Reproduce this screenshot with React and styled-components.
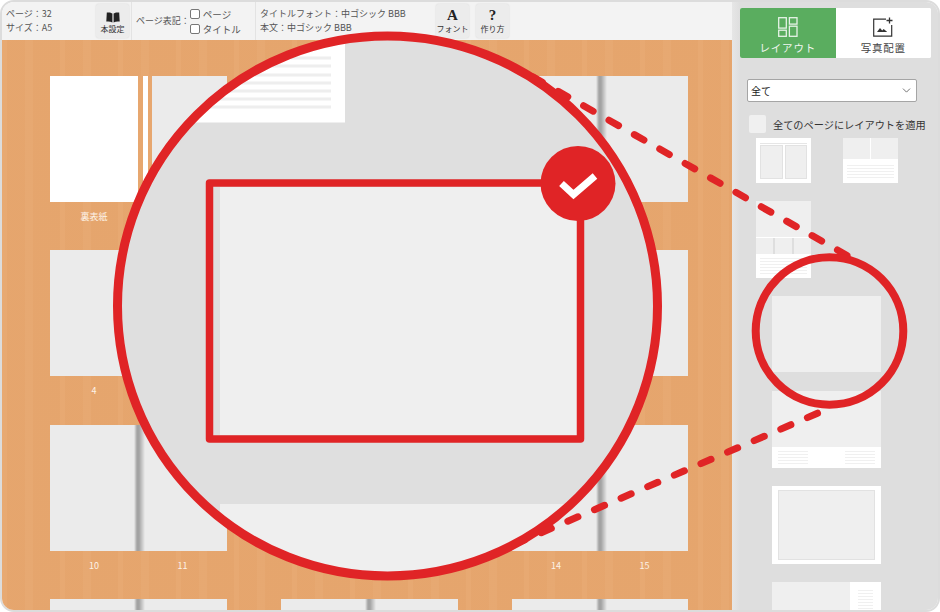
import React from 'react'
import styled, { createGlobalStyle } from 'styled-components'
import { ChevronDown } from 'lucide-react'

const GlobalStyle = createGlobalStyle`
  * { box-sizing: border-box; }
  html, body { margin: 0; padding: 0; background: #fff; }
  body { font-family: "Noto Sans CJK JP", "Noto Sans", sans-serif; color: #444; }
`

const rows = [
  [{ cover: true, labels: ['裏表紙', ''] }, {}, {}],
  [{ labels: ['4', ''] }, {}, {}],
  [{ labels: ['10', '11'] }, {}, { labels: ['14', '15'] }],
  [{}, {}, {}],
]

const App = () => (
  <>
    <GlobalStyle />
    <Frame>
      <Main>
        <Toolbar>
          <Info>
            <span>ページ：32</span>
            <span>サイズ：A5</span>
          </Info>
          <ToolButton>
            <BookIcon />
            <small>本設定</small>
          </ToolButton>
          <Section $width={124}>
            <span>ページ表記：</span>
            <Checks>
              <CheckRow><Box />ページ</CheckRow>
              <CheckRow><Box />タイトル</CheckRow>
            </Checks>
          </Section>
          <FontInfo>
            <span>タイトルフォント：中ゴシック BBB</span>
            <span>本文：中ゴシック BBB</span>
          </FontInfo>
          <ToolButton $gap={7}>
            <Glyph>A</Glyph>
            <small>フォント</small>
          </ToolButton>
          <ToolButton>
            <Glyph>?</Glyph>
            <small>作り方</small>
          </ToolButton>
        </Toolbar>
        <Workspace>
          <Spreads>
            {rows.flat().map((spread, i) => (
              <SpreadCell key={i}>
                {spread.cover ? (
                  <Spread $cover>
                    <CoverBack />
                    <Spine />
                    <CoverFront />
                  </Spread>
                ) : (
                  <Spread />
                )}
                <PageLabels>
                  {(spread.labels || []).map((label, j) => (
                    <span key={j}>{label}</span>
                  ))}
                </PageLabels>
              </SpreadCell>
            ))}
          </Spreads>
        </Workspace>
      </Main>
      <Sidebar>
        <Tabs>
          <Tab $active>
            <LayoutIcon />
            レイアウト
          </Tab>
          <Tab>
            <PhotoIcon />
            写真配置
          </Tab>
        </Tabs>
        <SelectBox>
          全て
          <ChevronDown size={13} strokeWidth={1.5} color="#555" />
        </SelectBox>
        <ApplyRow>
          <ApplyBox />
          全てのページにレイアウトを適用
        </ApplyRow>
        <SmallThumbs>
          <SmallThumb $height={45} $pad="5px 4px 4px">
            <TopBand />
            <TwoUp $height={34}>
              <Photo $edge />
              <Photo $edge />
            </TwoUp>
          </SmallThumb>
          <SmallThumb $height={45}>
            <TwoUp $height={21} $gap={1}>
              <Photo />
              <Photo />
            </TwoUp>
            <Lines $count={5} $pad="4px 4px" />
          </SmallThumb>
          <SmallThumb $height={77}>
            <Photo $height={36} />
            <ThreeUp>
              <Photo />
              <Photo />
              <Photo />
            </ThreeUp>
            <Lines $count={5} $pad="3px 4px" />
          </SmallThumb>
        </SmallThumbs>
        <LargeThumbs>
          <LargeThumb $height={77} $plain>
            <Photo $height={76} />
          </LargeThumb>
          <LargeThumb $height={76.5}>
            <Photo $height={56} />
            <Columns>
              <Lines $count={5} />
              <Lines $count={5} />
            </Columns>
          </LargeThumb>
          <LargeThumb $height={78} $pad="4px 6px 4px">
            <Photo $edge $height={70} />
          </LargeThumb>
          <LargeThumb $height={40} $row>
            <Photo />
            <SideText>
              <Lines $count={6} />
            </SideText>
          </LargeThumb>
        </LargeThumbs>
      </Sidebar>
      <Overlay viewBox="0 0 940 612">
        <defs>
          <clipPath id="lens">
            <circle cx="387.5" cy="306" r="270" />
          </clipPath>
        </defs>
        <circle cx="387.5" cy="306" r="270" fill="#dfdfdf" />
        <g clipPath="url(#lens)">
          <rect x="100" y="30" width="245" height="92.5" fill="#fff" />
          {[58, 66, 75, 83, 91, 99, 107].map((y) => (
            <rect key={y} x="205" y={y - 1.5} width="126" height="3" fill="#eeeeee" />
          ))}
          <rect x="220" y="504" width="345" height="90" fill="#efefef" />
        </g>
        <circle cx="387.5" cy="306" r="270" fill="none" stroke="#e02426" strokeWidth="9" />
        <rect x="220" y="187" width="357" height="248" fill="#efefef" />
        <rect x="209.5" y="183" width="371" height="256" fill="none" stroke="#e02426" strokeWidth="7.5" strokeLinejoin="round" />
        <circle cx="578" cy="183.5" r="37.5" fill="#e02426" />
        <path d="M561.5 183.5 L573.5 194.5 L595 176" fill="none" stroke="#fff" strokeWidth="7" />
        <line x1="532.8" y1="76.9" x2="848" y2="256" stroke="#e02426" strokeWidth="7" strokeLinecap="round" strokeDasharray="11 18.2" />
        <line x1="514.6" y1="544.2" x2="825" y2="410" stroke="#e02426" strokeWidth="7" strokeLinecap="round" strokeDasharray="11 18" />
        <circle cx="829.5" cy="331" r="73.8" fill="none" stroke="#e02426" strokeWidth="8" />
      </Overlay>
    </Frame>
  </>
)

const BookIcon = () => (
  <svg width="14" height="11" viewBox="0 0 14 11">
    <path d="M6.4 1.6C5.2.6 3 .2.8.6L.3 9.6c2.2-.4 4.5-.1 6.1.9zM7.6 1.6C8.8.6 11 .2 13.2.6l.5 9c-2.2-.4-4.5-.1-6.1.9z" fill="#222" />
  </svg>
)

const LayoutIcon = () => (
  <svg width="20" height="20" viewBox="0 0 20 20" fill="none" stroke="#fff" strokeWidth="1.3" opacity="0.85">
    <rect x="0.7" y="0.7" width="7.6" height="10.4" />
    <rect x="11.4" y="0.7" width="7.6" height="6.4" />
    <rect x="0.7" y="13.2" width="7.6" height="6.1" />
    <rect x="11.4" y="9.2" width="7.6" height="10.1" />
  </svg>
)

const PhotoIcon = () => (
  <svg width="21" height="20" viewBox="0 0 21 20" fill="none">
    <path d="M13 2.2H.7v17h18V8" stroke="#333" strokeWidth="1.2" />
    <path d="M16.5 .5v6M13.5 3.5h6" stroke="#333" strokeWidth="1.3" />
    <path d="M4 15l3-4 2.200 2.500 1.500-1.500 3.500 3z" fill="#333" />
  </svg>
)

const Frame = styled.div`
  position: relative;
  display: flex;
  width: 940px;
  height: 612px;
  border: 2px solid #dcdcdc;
  border-radius: 14px;
  overflow: hidden;
`

const Main = styled.div`
  display: flex;
  flex-direction: column;
  width: 730px;
  flex-shrink: 0;
`

const Toolbar = styled.div`
  display: flex;
  align-items: center;
  height: 38px;
  flex-shrink: 0;
  background: #f3f3f3;
  font-size: 9px;
  line-height: 14px;
  color: #555;
`

const Info = styled.div`
  display: flex;
  flex-direction: column;
  width: 94px;
  padding-left: 4px;
`

const ToolButton = styled.div`
  display: flex;
  flex-direction: column;
  align-items: center;
  justify-content: flex-end;
  width: 33px;
  height: 34px;
  margin-right: ${(p) => p.$gap || 0}px;
  padding-bottom: 3px;
  background: #ececec;
  border-radius: 3px;
  box-shadow: 0 0 2px rgba(0, 0, 0, 0.12);
  small {
    font-size: 8px;
    line-height: 12px;
    color: #333;
    white-space: nowrap;
  }
`

const Glyph = styled.span`
  font-family: "Liberation Serif", serif;
  font-weight: 700;
  font-size: 15px;
  line-height: 15px;
  color: #222;
`

const Section = styled.div`
  display: flex;
  align-items: center;
  width: ${(p) => p.$width}px;
  height: 100%;
  margin-left: 2px;
  padding-left: 4px;
  border-left: 1px solid #e3e3e3;
`

const Checks = styled.div`
  display: flex;
  flex-direction: column;
`

const CheckRow = styled.div`
  display: flex;
  align-items: center;
  gap: 3px;
  height: 15px;
  font-size: 9.5px;
`

const Box = styled.span`
  width: 10px;
  height: 10px;
  background: #fff;
  border: 1px solid #777;
  border-radius: 2px;
`

const FontInfo = styled.div`
  display: flex;
  flex-direction: column;
  width: 181px;
  height: 100%;
  justify-content: center;
  padding-left: 4px;
  border-left: 1px solid #e3e3e3;
  white-space: nowrap;
`

const Workspace = styled.div`
  flex: 1;
  overflow: hidden;
  padding: 36px 0 0 48px;
  background-color: #e7a76f;
  background-image:
    repeating-linear-gradient(90deg, rgba(255, 255, 255, 0.025) 0 5px, rgba(160, 90, 30, 0.02) 5px 23px, rgba(255, 255, 255, 0.02) 23px 31px, rgba(160, 90, 30, 0.025) 31px 58px);
`

const Spreads = styled.div`
  display: grid;
  grid-template-columns: 177px 177px 176px;
  column-gap: 54px;
`

const SpreadCell = styled.div`
  display: flex;
  flex-direction: column;
`

const Spread = styled.div`
  display: flex;
  height: 126px;
  background: ${(p) =>
    p.$cover
      ? '#ebebeb'
      : 'linear-gradient(90deg, #ebebeb 84px, #a3a3a3 87px, #a3a3a3 89px, #ebebeb 95px)'};
`

const CoverBack = styled.div`
  width: 88px;
  background: #fff;
`

const Spine = styled.div`
  width: 14px;
  background: linear-gradient(90deg, #e7a76f 5px, #fff 5px, #fff 10px, #e7a76f 10px);
`

const CoverFront = styled.div`
  flex: 1;
`

const PageLabels = styled.div`
  display: grid;
  grid-template-columns: 88px 89px;
  height: 48.4px;
  padding-top: 8px;
  font-size: 9px;
  line-height: 14px;
  color: #fdf3e8;
  text-align: center;
`

const Sidebar = styled.div`
  width: 206px;
  padding: 6px 7px 0 8px;
  overflow: hidden;
  background: linear-gradient(90deg, #e6e6e6 0, #dedede 8px);
`

const Tabs = styled.div`
  display: flex;
  height: 50px;
  background: #fff;
  border-radius: 2px;
  overflow: hidden;
`

const Tab = styled.div`
  display: flex;
  flex-direction: column;
  align-items: center;
  gap: 3px;
  width: 50%;
  padding-top: 9px;
  font-size: 10.5px;
  line-height: 15px;
  letter-spacing: 0.8px;
  color: ${(p) => (p.$active ? '#f0f6ef' : '#444')};
  background: ${(p) => (p.$active ? '#5aad5f' : '#fff')};
`

const SelectBox = styled.div`
  display: flex;
  align-items: center;
  justify-content: space-between;
  width: 170px;
  height: 23px;
  margin: 21px 0 0 7px;
  padding: 0 3px;
  font-size: 10px;
  color: #222;
  background: #fff;
  border: 1px solid #a5a5a5;
  border-radius: 2px;
`

const ApplyRow = styled.div`
  display: flex;
  align-items: center;
  gap: 7px;
  height: 18px;
  margin: 13px 0 0 9px;
  font-size: 10.2px;
  color: #333;
  white-space: nowrap;
`

const ApplyBox = styled.span`
  width: 17px;
  height: 18px;
  flex-shrink: 0;
  background: #f0f0f0;
  border-radius: 2px;
`

const SmallThumbs = styled.div`
  display: grid;
  grid-template-columns: 55px 55px;
  column-gap: 32px;
  row-gap: 18px;
  margin: 5px 0 0 16px;
`

const SmallThumb = styled.div`
  display: flex;
  flex-direction: column;
  height: ${(p) => p.$height}px;
  padding: ${(p) => p.$pad || 0};
  background: #fff;
`

const TopBand = styled.div`
  height: 3px;
  margin-bottom: 1px;
  background: #e6e6e6;
`

const TwoUp = styled.div`
  display: grid;
  grid-template-columns: 1fr 1fr;
  gap: ${(p) => p.$gap ?? 2}px;
  height: ${(p) => p.$height}px;
  flex-shrink: 0;
`

const ThreeUp = styled.div`
  display: grid;
  grid-template-columns: 1fr 1fr 1fr;
  gap: 2px;
  height: 16px;
  margin: 1px 0;
  flex-shrink: 0;
  background: #dedede;
`

const Photo = styled.div`
  height: ${(p) => (p.$height ? `${p.$height}px` : 'auto')};
  flex: ${(p) => (p.$height ? 'none' : 1)};
  background: #efefef;
  border: ${(p) => (p.$edge ? '1px solid #e2e2e2' : 'none')};
`

const Lines = styled.div`
  flex: 1;
  padding: ${(p) => p.$pad || 0};
  background: repeating-linear-gradient(180deg, #f0f0f0 0 1px, transparent 1px 3px);
  background-clip: content-box;
`

const LargeThumbs = styled.div`
  display: flex;
  flex-direction: column;
  gap: 18px;
  width: 109px;
  margin: 18px 0 0 32px;
`

const LargeThumb = styled.div`
  display: flex;
  flex-direction: ${(p) => (p.$row ? 'row' : 'column')};
  flex-shrink: 0;
  height: ${(p) => p.$height}px;
  padding: ${(p) => p.$pad || 0};
  background: ${(p) => (p.$plain ? 'transparent' : '#fff')};
`

const Columns = styled.div`
  display: grid;
  grid-template-columns: 30px 30px;
  justify-content: space-between;
  flex: 1;
  padding: 4px 6px;
  ${Lines} { height: 100%; }
`

const SideText = styled.div`
  display: flex;
  width: 31px;
  padding: 8px 8px 0;
`

const Overlay = styled.svg`
  position: absolute;
  top: -2px;
  left: -2px;
  width: 940px;
  height: 612px;
  pointer-events: none;
`

export default App
